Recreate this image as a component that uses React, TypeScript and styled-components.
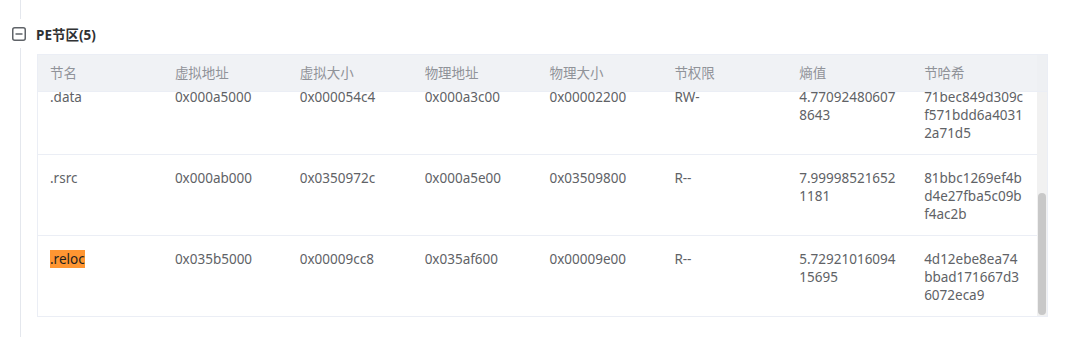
import React, { FunctionComponent, useLayoutEffect, useRef } from "react";

import styled, { createGlobalStyle } from "styled-components";

type TSection = {
  name: string;
  vAddr: string;
  vSize: string;
  pAddr: string;
  pSize: string;
  perm: string;
  entropy: string;
  hash: string;
  marked?: boolean;
};

const columns = ["节名", "虚拟地址", "虚拟大小", "物理地址", "物理大小", "节权限", "熵值", "节哈希"];

const sections: TSection[] = [
  {
    name: ".text",
    vAddr: "0x00001000",
    vSize: "0x0007e3a8",
    pAddr: "0x00000400",
    pSize: "0x0007e400",
    perm: "R-X",
    entropy: "6.5143281920357",
    hash: "9c03d1f0a8b27e4c5d6f19e2a0b7c8d3",
  },
  {
    name: ".rdata",
    vAddr: "0x00080000",
    vSize: "0x00024b10",
    pAddr: "0x0007e800",
    pSize: "0x00024c00",
    perm: "R--",
    entropy: "5.1320947781056",
    hash: "e2f94a0c7b13d58e6a2c90f1b4d7e305",
  },
  {
    name: ".data",
    vAddr: "0x000a5000",
    vSize: "0x000054c4",
    pAddr: "0x000a3c00",
    pSize: "0x00002200",
    perm: "RW-",
    entropy: "4.770924806078643",
    hash: "71bec849d309cf571bdd6a40312a71d5",
  },
  {
    name: ".rsrc",
    vAddr: "0x000ab000",
    vSize: "0x0350972c",
    pAddr: "0x000a5e00",
    pSize: "0x03509800",
    perm: "R--",
    entropy: "7.999985216521181",
    hash: "81bbc1269ef4bd4e27fba5c09bf4ac2b",
  },
  {
    name: ".reloc",
    vAddr: "0x035b5000",
    vSize: "0x00009cc8",
    pAddr: "0x035af600",
    pSize: "0x00009e00",
    perm: "R--",
    entropy: "5.7292101609415695",
    hash: "4d12ebe8ea74bbad171667d36072eca9",
    marked: true,
  },
];

const GlobalStyle = createGlobalStyle`
  body {
    margin: 0;
    background: #ffffff;
    font-family: "Noto Sans", "Noto Sans CJK SC", sans-serif;
  }
`;

const StyledPage = styled.div`
  height: 337px;
  padding-left: 12px;
  overflow: hidden;
`;

const StyledTopLine = styled.div`
  margin-left: 8px;
  height: 19px;
  border-left: 1px solid #e4e7ed;
`;

const StyledNodeHeader = styled.div`
  display: flex;
  align-items: center;
  gap: 10px;
  height: 29px;
`;

const StyledTitle = styled.span`
  font-size: 13.5px;
  font-weight: 700;
  color: #303133;
`;

const StyledChildren = styled.div`
  margin-left: 8px;
  padding: 6px 0 21px 16px;
  border-left: 1px solid #e4e7ed;
`;

const StyledTable = styled.div`
  width: 1011px;
  box-sizing: border-box;
  border: 1px solid #ebeef5;
  font-size: 13.5px;
`;

const StyledHeadRow = styled.div`
  display: grid;
  grid-template-columns: repeat(8, 1fr) 10px;
  height: 36px;
  background: #f0f2f5;
  border-bottom: 1px solid #ebeef5;
`;

const StyledHeadCell = styled.div`
  padding: 0 12px;
  line-height: 36px;
  color: #909399;
  white-space: nowrap;
`;

const StyledGutter = styled.div`
  background: #eef0f3;
`;

const StyledBodyWrap = styled.div`
  display: flex;
  height: 224px;
`;

const StyledViewport = styled.div`
  flex: 1;
  min-width: 0;
  overflow: hidden;
`;

const StyledTrack = styled.div`
  width: 10px;
  display: flex;
  flex-direction: column;
  justify-content: flex-end;
  background: #f1f1f1;
`;

const StyledThumb = styled.div`
  height: 122px;
  margin: 0 1px 1px 1px;
  border-radius: 4px;
  background: #c8c8c8;
`;

const StyledRow = styled.div`
  display: grid;
  grid-template-columns: repeat(8, 1fr);
  border-bottom: 1px solid #ebeef5;

  &:last-child {
    border-bottom: none;
  }
`;

const StyledCell = styled.div`
  padding: 14px 12px 12px;
  line-height: 18px;
  color: #606266;
  word-break: break-all;
  min-width: 0;
`;

const StyledMark = styled.mark`
  background: #ff9632;
  color: #1f1f1f;
`;

const CollapseIcon: FunctionComponent = () => (
  <svg width="14" height="14" viewBox="0 0 14 14">
    <rect x="0.75" y="0.75" width="12.5" height="12.5" rx="2" fill="#fff" stroke="#5f6368" strokeWidth="1.5" />
    <line x1="3.5" y1="7" x2="10.5" y2="7" stroke="#5f6368" strokeWidth="1.5" />
  </svg>
);

const App: FunctionComponent = () => {
  const viewportRef = useRef<HTMLDivElement>(null);

  // table body is scrolled all the way down
  useLayoutEffect(() => {
    if (viewportRef.current) {
      viewportRef.current.scrollTop = viewportRef.current.scrollHeight;
    }
  }, []);

  return (
    <StyledPage>
      <GlobalStyle />
      <StyledTopLine />
      <StyledNodeHeader>
        <CollapseIcon />
        <StyledTitle>PE节区(5)</StyledTitle>
      </StyledNodeHeader>
      <StyledChildren>
        <StyledTable>
          <StyledHeadRow>
            {columns.map((col) => (
              <StyledHeadCell key={col}>{col}</StyledHeadCell>
            ))}
            <StyledGutter />
          </StyledHeadRow>
          <StyledBodyWrap>
            <StyledViewport ref={viewportRef}>
              {sections.map((s) => (
                <StyledRow key={s.name}>
                  <StyledCell>{s.marked ? <StyledMark>{s.name}</StyledMark> : s.name}</StyledCell>
                  <StyledCell>{s.vAddr}</StyledCell>
                  <StyledCell>{s.vSize}</StyledCell>
                  <StyledCell>{s.pAddr}</StyledCell>
                  <StyledCell>{s.pSize}</StyledCell>
                  <StyledCell>{s.perm}</StyledCell>
                  <StyledCell>{s.entropy}</StyledCell>
                  <StyledCell>{s.hash}</StyledCell>
                </StyledRow>
              ))}
            </StyledViewport>
            <StyledTrack>
              <StyledThumb />
            </StyledTrack>
          </StyledBodyWrap>
        </StyledTable>
      </StyledChildren>
    </StyledPage>
  );
};

export default App;
